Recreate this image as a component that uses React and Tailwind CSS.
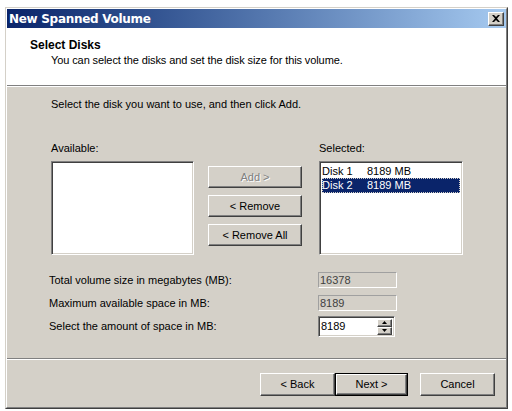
import React from 'react';

const raised = 'border border-t-white border-l-white border-r-[#404040] border-b-[#404040] shadow-[inset_-1px_-1px_#808080,inset_1px_1px_#d4d0c8] bg-[#d4d0c8]';
const sunken = 'border border-t-[#808080] border-l-[#808080] border-r-white border-b-white shadow-[inset_1px_1px_#404040,inset_-1px_-1px_#d4d0c8]';

const Btn = ({ children, disabled, className = '' }) => (
  <div className={`${raised} flex items-center justify-center ${className}`}>
    <span className={disabled ? 'text-[#808080] [text-shadow:1px_1px_0_white]' : 'text-black'}>{children}</span>
  </div>
);

const ReadOnlyField = ({ value }) => (
  <div className="w-[79px] h-[16px] border border-t-[#a0a0a0] border-l-[#a0a0a0] border-r-white border-b-white bg-[#d4d0c8] flex items-center pl-[1px] text-[#404040]">
    {value}
  </div>
);

export default function App() {
  return (
    <div className="w-[512px] h-[411px] bg-white overflow-hidden font-['Liberation_Sans',Arial,sans-serif] text-[11px] text-black leading-none">
      {/* window frame */}
      <div className="ml-[5px] mt-[7px] w-[503px] h-[402px] border border-t-[#d4d0c8] border-l-[#d4d0c8] border-r-[#404040] border-b-[#404040]">
        <div className="w-full h-full border border-t-white border-l-white border-r-[#808080] border-b-[#808080] bg-[#d4d0c8] flex flex-col">
          {/* title bar */}
          <div className="h-[19px] bg-gradient-to-r from-[#0a246a] to-[#a6caf0] flex items-center justify-between pl-[2px] pr-[2px]">
            <span className="text-white font-bold text-[12px] font-['DejaVu_Sans',sans-serif] tracking-[-0.3px]">New Spanned Volume</span>
            <div className={`${raised} w-[16px] h-[14px] flex items-center justify-center`}>
              <svg width="8" height="7" viewBox="0 0 8 7">
                <path d="M0 0h2l2 2 2-2h2L5 3.5 8 7H6L4 5 2 7H0l3-3.5z" fill="black" />
              </svg>
            </div>
          </div>

          {/* header */}
          <div className="h-[58px] bg-white pl-[23px] pt-[11px] border-b border-b-[#808080]">
            <div className="font-bold text-[12px]">Select Disks</div>
            <div className="pl-[21px] mt-[4px] tracking-[-0.1px]">You can select the disks and set the disk size for this volume.</div>
          </div>
          <div className="h-[1px] bg-white" />

          {/* body */}
          <div className="flex-1 pl-[44px] pt-[12px]">
            <div>Select the disk you want to use, and then click Add.</div>

            <div className="flex mt-[33px]">
              <div className="flex flex-col">
                <div className="h-[18px]">Available:</div>
                <div className={`${sunken} bg-white w-[143px] h-[94px]`} />
              </div>

              <div className="flex flex-col gap-[7px] ml-[14px] mt-[23px] w-[94px]">
                <Btn disabled className="h-[22px]">Add &gt;</Btn>
                <Btn className="h-[22px]">&lt; Remove</Btn>
                <Btn className="h-[22px]">&lt; Remove All</Btn>
              </div>

              <div className="flex flex-col ml-[17px]">
                <div className="h-[18px]">Selected:</div>
                <div className={`${sunken} bg-white w-[144px] h-[94px] p-[2px] flex flex-col`}>
                  <div className="h-[14px] flex items-center">
                    <span className="w-[45px]">Disk 1</span>
                    <span>8189 MB</span>
                  </div>
                  <div className="h-[15px] flex items-center bg-[#0a246a] text-white outline outline-1 outline-dotted outline-[#d4d0c8] -outline-offset-1">
                    <span className="w-[45px]">Disk 2</span>
                    <span>8189 MB</span>
                  </div>
                </div>
              </div>
            </div>

            <div className="flex flex-col mt-[17px] -ml-[2px]">
              <div className="flex items-center h-[16px]">
                <span className="w-[269px]">Total volume size in megabytes (MB):</span>
                <ReadOnlyField value="16378" />
              </div>
              <div className="flex items-center h-[16px] mt-[7px]">
                <span className="w-[269px]">Maximum available space in MB:</span>
                <ReadOnlyField value="8189" />
              </div>
              <div className="flex items-center h-[21px] mt-[5px]">
                <span className="w-[269px]">Select the amount of space in MB:</span>
                <div className={`${sunken} bg-white w-[77px] h-[21px] flex items-center justify-between pl-[2px] pr-[2px]`}>
                  <span>8189</span>
                  <div className="flex flex-col">
                    <div className={`${raised} w-[15px] h-[8px] flex items-center justify-center`}>
                      <svg width="5" height="3" viewBox="0 0 5 3"><path d="M2.5 0L5 3H0z" fill="black" /></svg>
                    </div>
                    <div className={`${raised} w-[15px] h-[8px] flex items-center justify-center`}>
                      <svg width="5" height="3" viewBox="0 0 5 3"><path d="M0 0h5L2.5 3z" fill="black" /></svg>
                    </div>
                  </div>
                </div>
              </div>
            </div>
          </div>

          {/* footer separator */}
          <div className="h-[1px] bg-[#808080]" />
          <div className="h-[1px] bg-white" />

          {/* footer */}
          <div className="h-[47px] flex items-start pt-[13px] pl-[253px]">
            <Btn className="w-[75px] h-[23px]">&lt; Back</Btn>
            <div className="w-[73px] h-[23px] border border-black">
              <Btn className="w-full h-full">Next &gt;</Btn>
            </div>
            <Btn className="w-[75px] h-[23px] ml-[12px]">Cancel</Btn>
          </div>
        </div>
      </div>
    </div>
  );
}
